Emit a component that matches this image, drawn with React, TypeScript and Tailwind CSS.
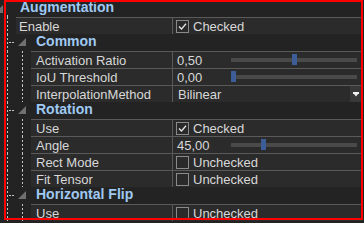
import * as React from "react";

// Dark property grid (Augmentation settings) with tree guides.

type Value =
  | { type: "check"; checked: boolean }
  | { type: "slider"; text: string; pos: number }
  | { type: "select"; text: string };

type Row =
  | { kind: "cat"; label: string }
  | { kind: "group"; label: string }
  | { kind: "prop"; level: 1 | 2; label: string; value: Value };

const rows: Row[] = [
  { kind: "cat", label: "Augmentation" },
  { kind: "prop", level: 1, label: "Enable", value: { type: "check", checked: true } },
  { kind: "group", label: "Common" },
  { kind: "prop", level: 2, label: "Activation Ratio", value: { type: "slider", text: "0,50", pos: 0.5 } },
  { kind: "prop", level: 2, label: "IoU Threshold", value: { type: "slider", text: "0,00", pos: 0 } },
  { kind: "prop", level: 2, label: "InterpolationMethod", value: { type: "select", text: "Bilinear" } },
  { kind: "group", label: "Rotation" },
  { kind: "prop", level: 2, label: "Use", value: { type: "check", checked: true } },
  { kind: "prop", level: 2, label: "Angle", value: { type: "slider", text: "45,00", pos: 0.25 } },
  { kind: "prop", level: 2, label: "Rect Mode", value: { type: "check", checked: false } },
  { kind: "prop", level: 2, label: "Fit Tensor", value: { type: "check", checked: false } },
  { kind: "group", label: "Horizontal Flip" },
  { kind: "prop", level: 2, label: "Use", value: { type: "check", checked: false } },
];

const GUIDE = "#c4c4c4";
const ARROW = "#707070";

function VLine({ x, y1 = 0, y2 = 17 }: { x: number; y1?: number; y2?: number }) {
  return <line x1={x + 0.5} y1={y1} x2={x + 0.5} y2={y2} stroke={GUIDE} strokeWidth={1} strokeDasharray="2 2" />;
}

function Gutter({ width, children }: { width: number; children?: React.ReactNode }) {
  return (
    <svg width={width} height={17} className="shrink-0 block" viewBox={`0 0 ${width} 17`}>
      {children}
    </svg>
  );
}

function CheckBox({ checked }: { checked: boolean }) {
  return (
    <span className="flex h-[13px] w-[13px] shrink-0 items-center justify-center border border-[#8a8a8a] bg-[#2a2a2a]">
      {checked && (
        <svg width="11" height="11" viewBox="0 0 11 11">
          <polyline points="2,5.5 4.5,8 9,2.8" fill="none" stroke="#e6e6e6" strokeWidth="1.3" />
        </svg>
      )}
    </span>
  );
}

function ValueCell({ value }: { value: Value }) {
  if (value.type === "check") {
    return (
      <div className="flex h-full w-[189px] items-center gap-[4px] pl-[3px]">
        <CheckBox checked={value.checked} />
        <span>{value.checked ? "Checked" : "Unchecked"}</span>
      </div>
    );
  }
  if (value.type === "slider") {
    return (
      <div className="flex h-full w-[189px] items-center pl-[4px] pr-[5px]">
        <span className="w-[54px] shrink-0">{value.text}</span>
        <div className="relative h-[4px] flex-1 bg-[#4a4a4a]">
          <div
            className="absolute top-[-4px] h-[11px] w-[5px] bg-[#3d5d98]"
            style={{ left: `${Math.round(value.pos * 121)}px` }}
          />
        </div>
      </div>
    );
  }
  return (
    <div className="flex h-full w-[189px] items-center pl-[5px]">
      <span className="flex-1">{value.text}</span>
      <div className="flex h-full w-[12px] items-center justify-center bg-[#383838]">
        <svg width="6" height="5" viewBox="0 0 6 5">
          <rect x="0" y="0" width="6" height="2" fill="#f2f2f2" />
          <polygon points="1,2 5,2 3,4.5" fill="#f2f2f2" />
        </svg>
      </div>
    </div>
  );
}

function GridRow({ row }: { row: Row }) {
  if (row.kind === "cat") {
    return (
      <div className="flex h-[17px] items-start">
        <Gutter width={20}>
          <polygon points="3,5 3,13 -5,13" fill={ARROW} />
          <VLine x={7} y1={15} />
        </Gutter>
        <span className="text-[14px] font-bold leading-[15px] text-[#9fc9f2]">{row.label}</span>
      </div>
    );
  }
  if (row.kind === "group") {
    return (
      <div className="flex h-[17px] items-start">
        <Gutter width={36}>
          <VLine x={7} />
          <line x1={9} y1={8.5} x2={15} y2={8.5} stroke={GUIDE} strokeWidth={1} strokeDasharray="2 1" />
          <polygon points="26,4 26,12 18,12" fill={ARROW} />
        </Gutter>
        <span className="text-[14px] font-bold leading-[15px] text-[#9fc9f2]">{row.label}</span>
      </div>
    );
  }
  const indent = row.level === 1 ? 16 : 31;
  return (
    <div className="flex h-[17px]">
      <Gutter width={indent}>
        <VLine x={7} />
        {row.level === 2 && <VLine x={22} />}
      </Gutter>
      <div className="flex flex-1 border-t border-[#5a5a5a] bg-[#2b2b2b] text-[13px] leading-[15px] text-[#d8d8d8]">
        <div className={`flex flex-1 items-center ${row.level === 1 ? "pl-[3px]" : "pl-[5px]"}`}>
          <span className="whitespace-nowrap">{row.label}</span>
        </div>
        <div className="w-px bg-[#5a5a5a]" />
        <ValueCell value={row.value} />
      </div>
    </div>
  );
}

export default function App() {
  return (
    <div
      className="relative h-[223px] w-[364px] overflow-hidden bg-[#232323]"
      style={{ fontFamily: '"Liberation Sans", Arial, sans-serif' }}
    >
      <div className="flex w-[362px] flex-col">
        {rows.map((row, i) => (
          <GridRow key={i} row={row} />
        ))}
      </div>
      {/* red highlight frame drawn over the grid */}
      <div className="pointer-events-none absolute left-[4px] top-0 h-[220px] w-[359px] border-2 border-[#ff0000]" />
    </div>
  );
}
